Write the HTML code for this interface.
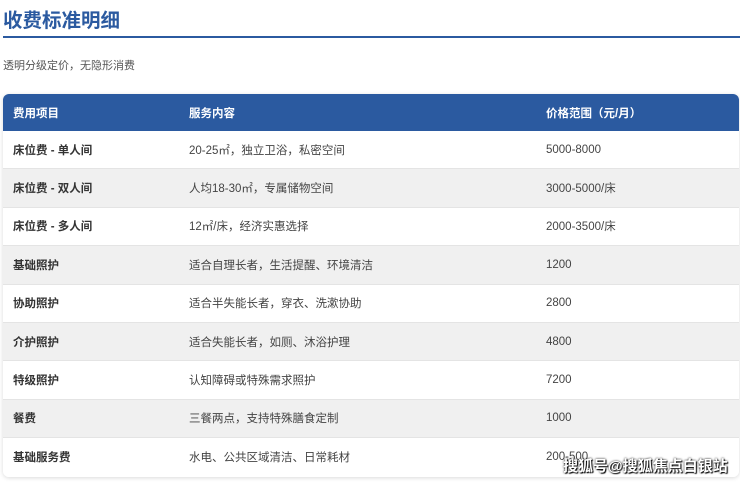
<!DOCTYPE html>
<html><head><meta charset="utf-8"><style>
body{margin:0;width:740px;height:482px;background:#fff;font-family:"Liberation Sans","Noto Sans CJK SC",sans-serif;overflow:hidden;position:relative}
h1{position:absolute;left:3px;top:4px;margin:0;font-size:19.5px;color:#2b5aa0;font-weight:bold}
.line{position:absolute;left:3px;top:36px;width:737px;height:2px;background:#2b5aa0}
.sub{position:absolute;left:3px;top:57px;font-size:11px;color:#555}
.tbl{position:absolute;left:3px;top:94px;width:736px;border-radius:6px;overflow:hidden;box-shadow:0 1px 4px rgba(0,0,0,.15)}
.r{height:38.4px;position:relative;font-size:11.5px;color:#444;border-bottom:1px solid #e4e4e4;box-sizing:border-box}
.r span{position:absolute;top:50%;transform:translateY(-50%)}
.a{left:10px;font-weight:bold;color:#333}.b{left:186px}.c{left:543px}
.h{background:#2b5aa0!important;color:#fff;height:37px;font-weight:bold;border:none}
.h span{font-weight:bold;color:#fff}
.wm{position:absolute;left:563px;top:455px;font-size:15px;color:#fff;font-weight:bold;text-shadow:0 0 2px #000,1px 1px 1px #000}
</style></head><body>
<h1>收费标准明细</h1>
<div class="line"></div>
<div class="sub">透明分级定价，无隐形消费</div>
<div class="tbl">
<div class="r h"><span class="a">费用项目</span><span class="b">服务内容</span><span class="c">价格范围（元/月）</span></div>
<div class="r" style="background:#fff"><span class="a">床位费 - 单人间</span><span class="b">20-25㎡，独立卫浴，私密空间</span><span class="c">5000-8000</span></div>
<div class="r" style="background:#f0f0f0"><span class="a">床位费 - 双人间</span><span class="b">人均18-30㎡，专属储物空间</span><span class="c">3000-5000/床</span></div>
<div class="r" style="background:#fff"><span class="a">床位费 - 多人间</span><span class="b">12㎡/床，经济实惠选择</span><span class="c">2000-3500/床</span></div>
<div class="r" style="background:#f0f0f0"><span class="a">基础照护</span><span class="b">适合自理长者，生活提醒、环境清洁</span><span class="c">1200</span></div>
<div class="r" style="background:#fff"><span class="a">协助照护</span><span class="b">适合半失能长者，穿衣、洗漱协助</span><span class="c">2800</span></div>
<div class="r" style="background:#f0f0f0"><span class="a">介护照护</span><span class="b">适合失能长者，如厕、沐浴护理</span><span class="c">4800</span></div>
<div class="r" style="background:#fff"><span class="a">特级照护</span><span class="b">认知障碍或特殊需求照护</span><span class="c">7200</span></div>
<div class="r" style="background:#f0f0f0"><span class="a">餐费</span><span class="b">三餐两点，支持特殊膳食定制</span><span class="c">1000</span></div>
<div class="r" style="background:#fff;border:none"><span class="a">基础服务费</span><span class="b">水电、公共区域清洁、日常耗材</span><span class="c">200-500</span></div>
</div>
<div class="wm">搜狐号@搜狐焦点白银站</div>
</body></html>
